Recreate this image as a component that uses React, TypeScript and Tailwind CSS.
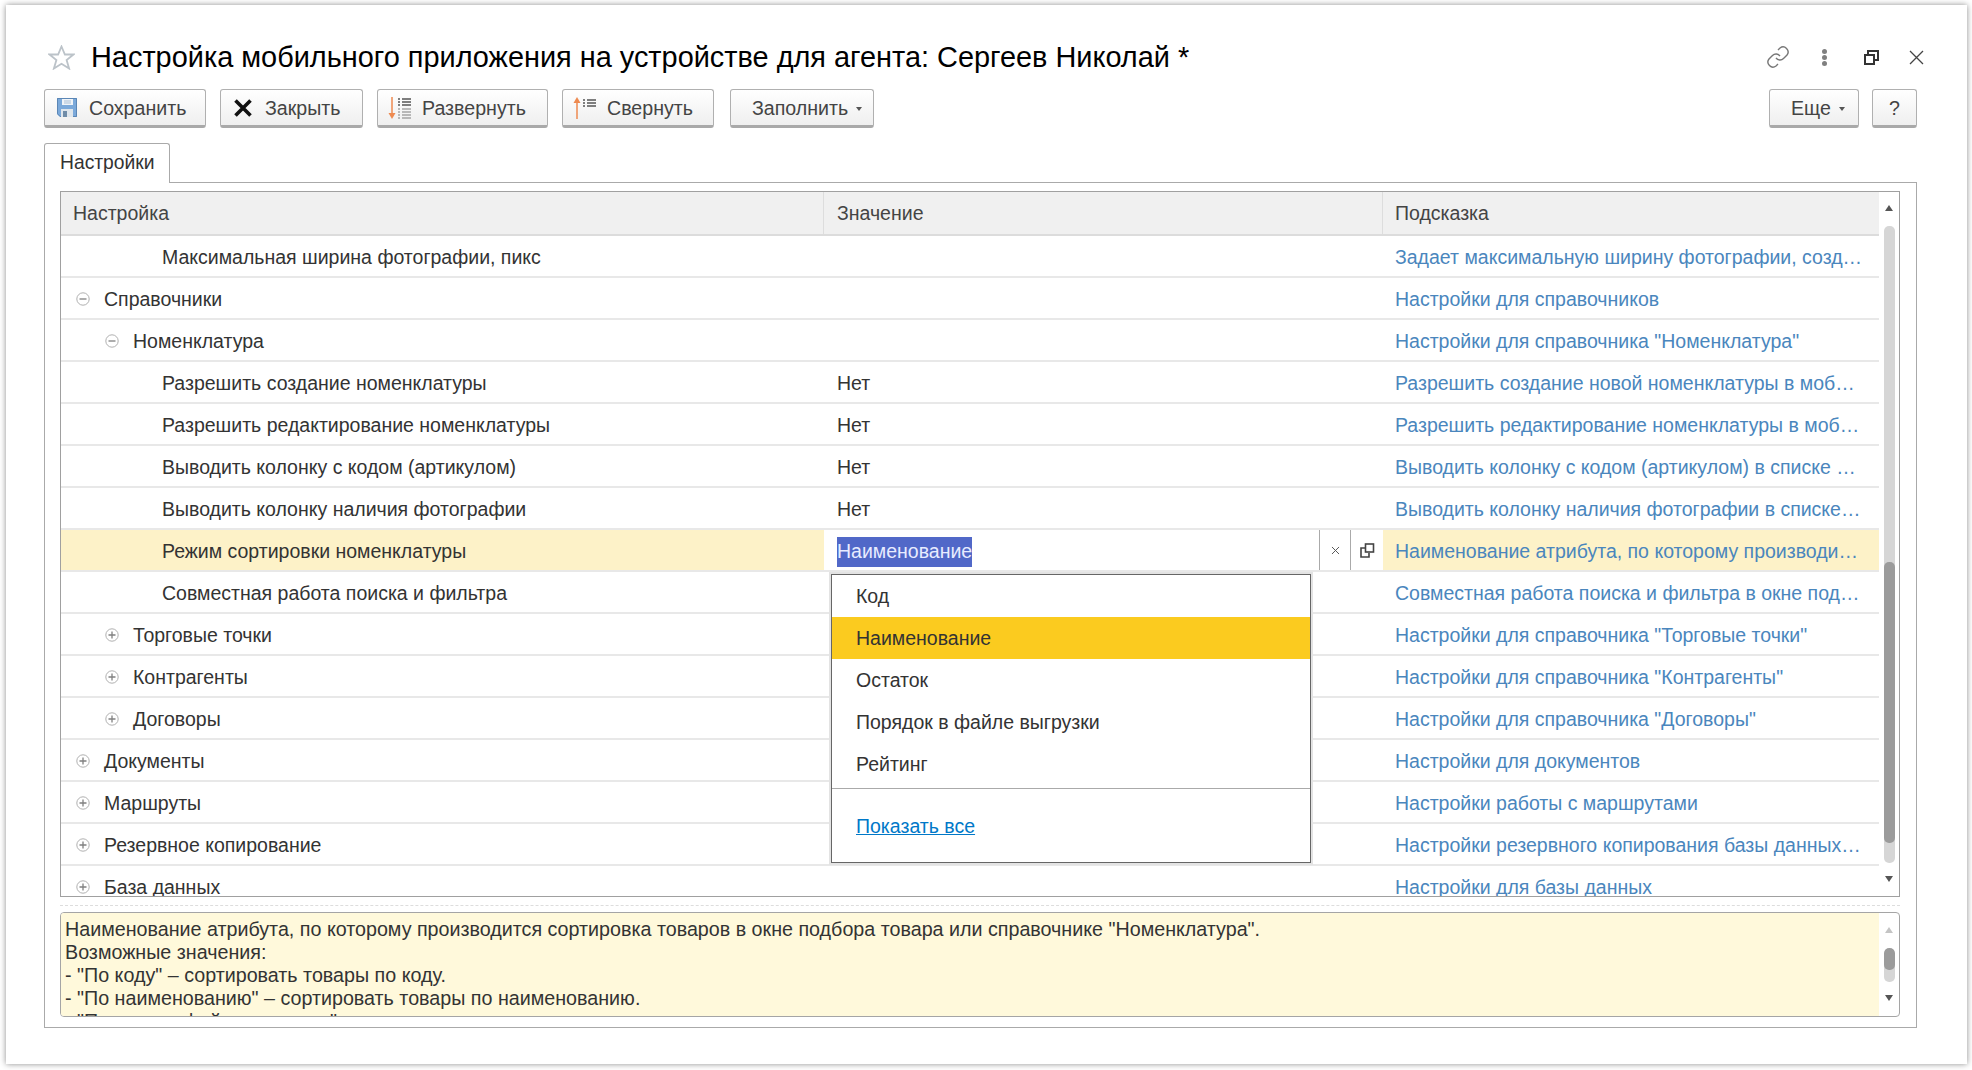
import { X } from 'lucide-react';

type Row = {
  label: string;
  level: 0 | 1 | 2;
  toggle?: 'open' | 'closed';
  value?: string;
  hint: string;
  active?: boolean;
};

const rows: Row[] = [
  { label: 'Максимальная ширина фотографии, пикс', level: 2, hint: 'Задает максимальную ширину фотографии, созд…' },
  { label: 'Справочники', level: 0, toggle: 'open', hint: 'Настройки для справочников' },
  { label: 'Номенклатура', level: 1, toggle: 'open', hint: 'Настройки для справочника "Номенклатура"' },
  { label: 'Разрешить создание номенклатуры', level: 2, value: 'Нет', hint: 'Разрешить создание новой номенклатуры в моб…' },
  { label: 'Разрешить редактирование номенклатуры', level: 2, value: 'Нет', hint: 'Разрешить редактирование номенклатуры в моб…' },
  { label: 'Выводить колонку с кодом (артикулом)', level: 2, value: 'Нет', hint: 'Выводить колонку с кодом (артикулом) в списке …' },
  { label: 'Выводить колонку наличия фотографии', level: 2, value: 'Нет', hint: 'Выводить колонку наличия фотографии в списке…' },
  { label: 'Режим сортировки номенклатуры', level: 2, hint: 'Наименование атрибута, по которому производи…', active: true },
  { label: 'Совместная работа поиска и фильтра', level: 2, hint: 'Совместная работа поиска и фильтра в окне под…' },
  { label: 'Торговые точки', level: 1, toggle: 'closed', hint: 'Настройки для справочника "Торговые точки"' },
  { label: 'Контрагенты', level: 1, toggle: 'closed', hint: 'Настройки для справочника "Контрагенты"' },
  { label: 'Договоры', level: 1, toggle: 'closed', hint: 'Настройки для справочника "Договоры"' },
  { label: 'Документы', level: 0, toggle: 'closed', hint: 'Настройки для документов' },
  { label: 'Маршруты', level: 0, toggle: 'closed', hint: 'Настройки работы с маршрутами' },
  { label: 'Резервное копирование', level: 0, toggle: 'closed', hint: 'Настройки резервного копирования базы данных…' },
  { label: 'База данных', level: 0, toggle: 'closed', hint: 'Настройки для базы данных' },
];

const options = ['Код', 'Наименование', 'Остаток', 'Порядок в файле выгрузки', 'Рейтинг'];

function Toggle({ open }: { open: boolean }) {
  return (
    <svg width="14" height="14" viewBox="0 0 14 14" className="shrink-0 mt-[-2px]">
      <circle cx="7" cy="7" r="6.2" fill="none" stroke="#b0b0b0" strokeWidth="1" />
      <path d={open ? 'M3.5 7h7' : 'M3.5 7h7M7 3.5v7'} stroke="#808080" strokeWidth="1.3" />
    </svg>
  );
}

function ToolButton({ icon, label, width, menu, center }: { icon?: React.ReactNode; label: string; width: string; menu?: boolean; center?: boolean }) {
  return (
    <button
      className={`${width} h-[39px] flex items-center ${center ? 'justify-center' : icon ? '' : 'pl-[21px]'} border border-[#b0b0b0] border-b-[3px] border-b-[#a9a9a9] rounded-[3px] bg-gradient-to-b from-white to-[#efefef] text-[19.6px] text-[#444]`}
    >
      {icon && <span className="w-[44px] h-full shrink-0 flex items-center justify-center">{icon}</span>}
      <span className="pt-[2px]">{label}</span>
      {menu && <span className="ml-[8px] mt-[3px] w-0 h-0 border-x-[3.5px] border-x-transparent border-t-[4px] border-t-[#555]" />}
    </button>
  );
}

function SaveIcon() {
  return (
    <svg width="20" height="19" viewBox="0 0 20 19">
      <path d="M0 0h20v19H3l-3-3z" fill="#7ba9da" />
      <path d="M.5.500h19v18H3.200L.5 15.800z" fill="none" stroke="#5b86b5" />
      <rect x="5" y="1" width="11" height="6" fill="#f0f4f8" />
      <path d="M7 3h7M7 5h7" stroke="#a9bfd6" strokeWidth="1" />
      <rect x="4" y="11" width="12" height="8" fill="#dfe6ec" />
      <rect x="6" y="13" width="4" height="6" fill="#6f8ca8" />
    </svg>
  );
}

function CloseIcon() {
  return (
    <svg width="18" height="18" viewBox="0 0 18 18">
      <path d="M1.500 1.500l15 15M16.500 1.500l-15 15" stroke="#111" strokeWidth="3.600" />
    </svg>
  );
}

function ExpandIcon() {
  return (
    <svg width="24" height="24" viewBox="0 0 24 24">
      <path d="M4 1v18" stroke="#ee8a50" strokeWidth="1.500" />
      <path d="M.5 17h7L4 23z" fill="#ee8a50" />
      <path d="M10 3h2M14 3h9M10 6h2M14 6h9M10 9h2M14 9h9" stroke="#555" strokeWidth="1.500" />
      <path d="M10 13h2M14 13h9M10 16h2M14 16h9M10 19h2M14 19h9M10 22h2M14 22h9" stroke="#a5a5a5" strokeWidth="1.500" />
    </svg>
  );
}

function CollapseIcon() {
  return (
    <svg width="24" height="24" viewBox="0 0 24 24">
      <path d="M4 23V5" stroke="#ee8a50" strokeWidth="1.500" />
      <path d="M.5 7h7L4 1z" fill="#ee8a50" />
      <path d="M10 4h2M14 4h9M10 7h2M14 7h9M10 10h2M14 10h9" stroke="#555" strokeWidth="1.500" />
    </svg>
  );
}

function ArrowUp({ light }: { light?: boolean }) {
  return <span className={`shrink-0 w-0 h-0 border-x-[4px] border-x-transparent border-b-[6px] ${light ? 'border-b-[#c4c4c4]' : 'border-b-[#555]'}`} />;
}

function ArrowDown() {
  return <span className="shrink-0 mt-[13px] w-0 h-0 border-x-[4px] border-x-transparent border-t-[6px] border-t-[#555]" />;
}

export default function App() {
  return (
    <div className="w-[1972px] h-[1070px] bg-white pt-[5px] pl-[6px] overflow-hidden font-['Liberation_Sans',Arial,sans-serif]">
      <div className="w-[1961px] h-[1059px] bg-white shadow-[0_0_6px_rgba(0,0,0,0.45)] pt-[32px] pl-[38px] pr-[50px]">
        {/* Title row */}
        <div className="h-[40px] flex items-center">
          <svg width="27" height="25" viewBox="0 0 27 25" className="ml-[4px] mr-[16px]">
            <path d="M13.5 1.5l3.4 8h8.6l-6.9 5.6 2.5 8.4-7.6-4.8-7.6 4.8 2.500-8.400L1.500 9.500h8.600z" fill="#fff" stroke="#bcc3c9" strokeWidth="1.800" />
          </svg>
          <h1 className="pt-[2px] text-[28.9px] text-black font-normal whitespace-nowrap">
            Настройка мобильного приложения на устройстве для агента: Сергеев Николай *
          </h1>
          <div className="ml-auto flex items-center">
            <svg width="24" height="24" viewBox="0 0 24 24" fill="none" stroke="#777" strokeWidth="1.400" className="mr-[32px]">
              <path d="M10 13a5 5 0 0 0 7.500.5l3.500-3.500a5 5 0 0 0-7-7l-2 2" />
              <path d="M14 11a5 5 0 0 0-7.500-.5l-3.500 3.500a5 5 0 0 0 7 7l2-2" />
            </svg>
            <div className="flex flex-col gap-[1px] mr-[37px]">
              <span className="w-[5px] h-[5px] rounded-full bg-[#808080]" />
              <span className="w-[5px] h-[5px] rounded-full bg-[#808080]" />
              <span className="w-[5px] h-[5px] rounded-full bg-[#808080]" />
            </div>
            <svg width="15" height="15" viewBox="0 0 15 15" fill="none" stroke="#333" strokeWidth="2" className="mr-[30px]">
              <rect x="1" y="5" width="9" height="9" />
              <path d="M4 5V1h10v9h-4" />
            </svg>
            <svg width="15" height="15" viewBox="0 0 15 15" fill="none" stroke="#444" strokeWidth="1.300" className="mr-[-7px]">
              <path d="M1 1l13 13M14 1L1 14" />
            </svg>
          </div>
        </div>

        {/* Toolbar */}
        <div className="mt-[12px] flex items-center gap-[14px]">
          <ToolButton width="w-[162px]" icon={<SaveIcon />} label="Сохранить" />
          <ToolButton width="w-[143px]" icon={<CloseIcon />} label="Закрыть" />
          <ToolButton width="w-[171px]" icon={<ExpandIcon />} label="Развернуть" />
          <ToolButton width="w-[152px]" icon={<CollapseIcon />} label="Свернуть" />
          <ToolButton width="w-[144px] ml-[2px]" label="Заполнить" menu />
          <div className="ml-auto flex gap-[13px]">
            <ToolButton width="w-[90px]" label="Еще" menu />
            <ToolButton width="w-[45px]" label="?" center />
          </div>
        </div>

        {/* Tab */}
        <div className="mt-[15px] relative z-10 w-[126px] h-[40px] border border-b-0 border-[#aaa] rounded-t-[3px] bg-white flex items-center pl-[15px] text-[19.3px] text-[#333]">
          Настройки
        </div>

        {/* Pane */}
        <div className="mt-[-1px] h-[846px] border border-[#aaa] pt-[8px] pl-[15px] pr-[16px]">
          <div className="relative h-[706px] border border-[#a0a0a0] flex overflow-hidden">
            <div className="flex-1 min-w-0">
              <div className="h-[44px] flex bg-[#f0f0f0] border-b-2 border-b-[#dcdcdc] text-[19.5px] text-[#444] items-center">
                <div className="w-[763px] pl-[12px] pt-[2px] border-r border-[#ddd] h-full flex items-center">Настройка</div>
                <div className="w-[559px] pl-[13px] pt-[2px] border-r border-[#ddd] h-full flex items-center">Значение</div>
                <div className="flex-1 pl-[12px] pt-[2px]">Подсказка</div>
              </div>
              {rows.map((row) => (
                <div
                  key={row.label}
                  className={`h-[42px] flex items-center border-b-2 border-b-[#e8e8e8] text-[19.5px] text-[#333] whitespace-nowrap ${row.active ? 'bg-[#fdf2c8] bg-clip-padding' : ''}`}
                >
                  <div
                    className={`w-[763px] h-full flex items-center pt-[4px] ${row.level === 2 ? 'pl-[101px]' : row.level === 1 ? 'pl-[44px]' : 'pl-[15px]'}`}
                  >
                    {row.toggle && <Toggle open={row.toggle === 'open'} />}
                    <span className={row.toggle ? 'ml-[14px]' : ''}>{row.label}</span>
                  </div>
                  {row.active ? (
                    <div className="w-[559px] h-full flex items-center bg-white pl-[13px]">
                      <span className="mt-[4px] bg-[#5168c8] text-[#e8ecff]">Наименование</span>
                      <div className="ml-auto h-full w-[31px] border-l border-[#aaa] flex items-center justify-center">
                        <X size={13} strokeWidth={1.8} color="#555" />
                      </div>
                      <div className="h-full w-[33px] border-l border-[#aaa] flex items-center justify-center">
                        <svg width="15" height="15" viewBox="0 0 15 15" fill="none" stroke="#444" strokeWidth="1.600">
                          <rect x="5.500" y="1" width="8" height="8" />
                          <path d="M5 5H1v9h8v-4" />
                        </svg>
                      </div>
                    </div>
                  ) : (
                    <div className="w-[559px] pl-[13px] pt-[4px]">{row.value}</div>
                  )}
                  <div className="flex-1 pl-[12px] pt-[4px] text-[#4a86bd]">{row.hint}</div>
                </div>
              ))}
            </div>

            {/* Scrollbar */}
            <div className="w-[20px] shrink-0 flex flex-col items-center pt-[13px]">
              <ArrowUp />
              <div className="mt-[15px] shrink-0 w-[11px] h-[637px] rounded-[5px] bg-[#d6d6d6] flex flex-col overflow-hidden">
                <div className="h-[336px] shrink-0" />
                <div className="h-[281px] shrink-0 bg-[#9b9b9b] rounded-[5px]" />
              </div>
              <ArrowDown />
            </div>

            {/* Dropdown */}
            <div className="absolute left-[768px] top-[380px] w-[484px] h-[293px] border-[2px] border-[#e3e3e3] bg-white">
              <div className="h-full border border-[#666] text-[19.5px] text-[#333]">
                {options.map((opt) => (
                  <div key={opt} className={`h-[42px] flex items-center pl-[24px] pt-[2px] ${opt === 'Наименование' ? 'bg-[#fbcb1f]' : ''}`}>
                    {opt}
                  </div>
                ))}
                <div className="mt-[3px] border-t border-[#aaa] pt-[23px] pl-[24px]">
                  <a className="text-[#0078c8] underline">Показать все</a>
                </div>
              </div>
            </div>
          </div>

          <div className="mt-[8px] border-t border-dashed border-[#ddd]" />

          {/* Hint box */}
          <div className="mt-[6px] h-[105px] flex overflow-hidden border border-[#a5a5a5] rounded-[4px]">
            <div className="flex-1 bg-[#fff9db] pl-[4px] pt-[5px] text-[19.7px] leading-[23px] text-[#333] whitespace-nowrap">
              <div>Наименование атрибута, по которому производится сортировка товаров в окне подбора товара или справочнике "Номенклатура".</div>
              <div>Возможные значения:</div>
              <div>- "По коду" – сортировать товары по коду.</div>
              <div>- "По наименованию" – сортировать товары по наименованию.</div>
              <div>- "Порядок в файле выгрузки" – сортировать товары в порядке выгрузки.</div>
            </div>
            <div className="w-[20px] shrink-0 flex flex-col items-center pt-[14px]">
              <ArrowUp light />
              <div className="mt-[15px] shrink-0 w-[11px] h-[34px] rounded-[5px] bg-[#d6d6d6] overflow-hidden">
                <div className="h-[22px] bg-[#9b9b9b] rounded-[5px]" />
              </div>
              <ArrowDown />
            </div>
          </div>
        </div>
      </div>
    </div>
  );
}
